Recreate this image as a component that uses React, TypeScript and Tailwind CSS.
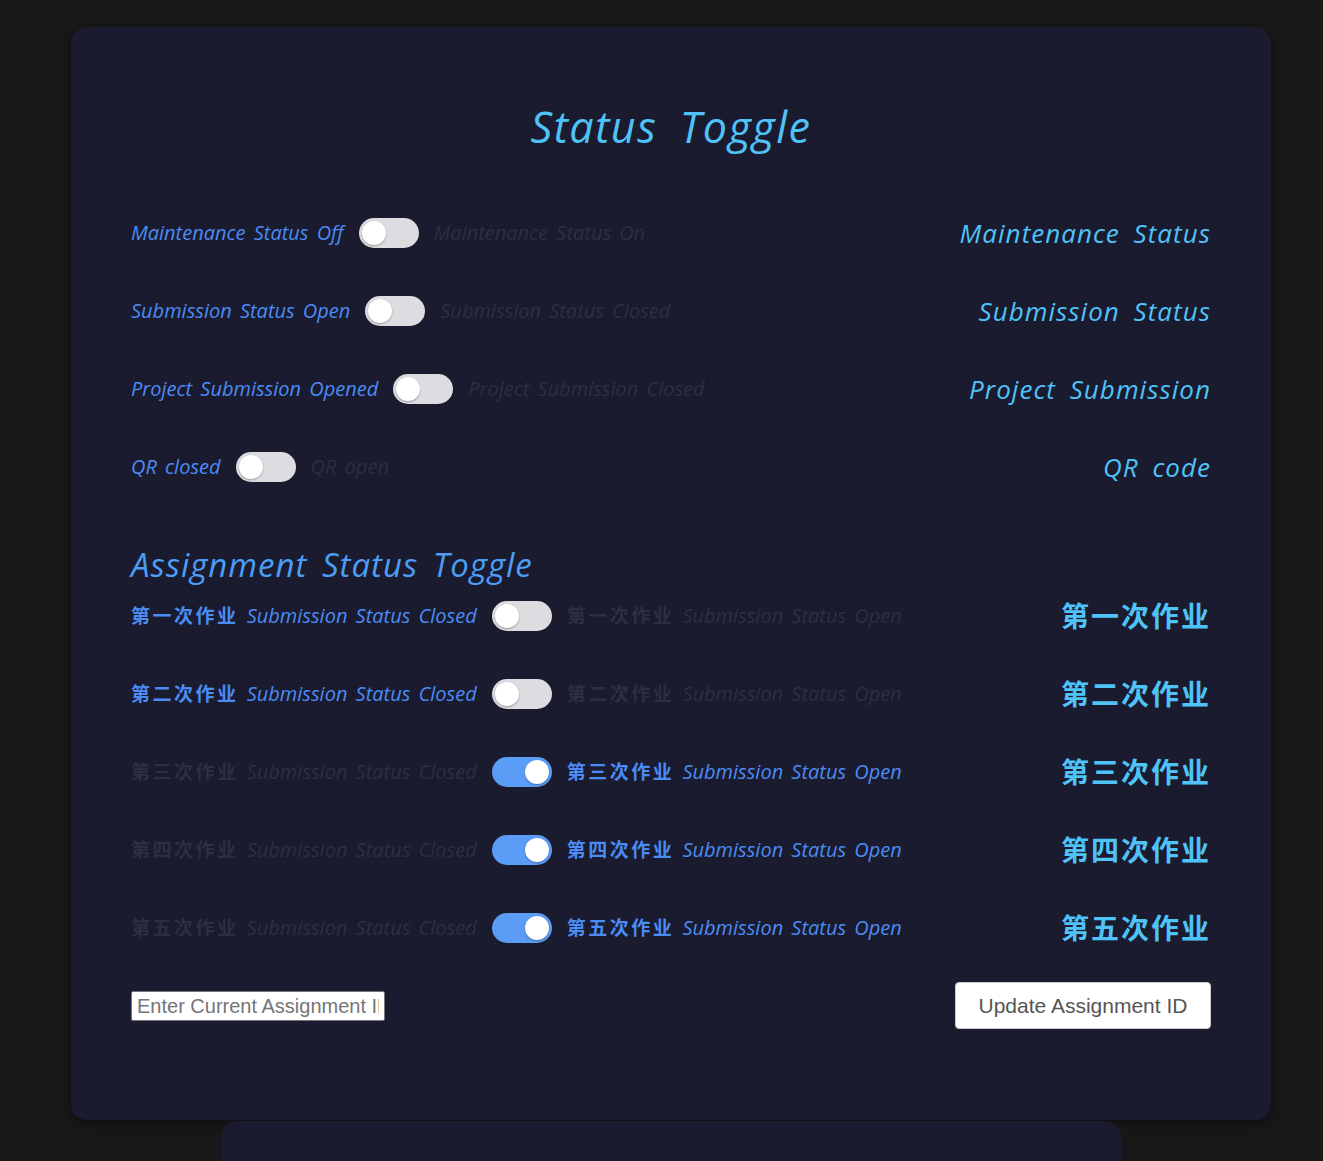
import React, { useState } from "react";

const font = { fontFamily: '"Open Sans", "Noto Sans CJK SC", sans-serif' };

function Toggle({ on, onClick }: { on: boolean; onClick: () => void }) {
  return (
    <button
      onClick={onClick}
      className={`relative shrink-0 w-[60px] h-[30px] rounded-full ${on ? "bg-[#5b9cf6]" : "bg-[#dcdce1]"}`}
    >
      <span
        className={`absolute top-[3px] w-[24px] h-[24px] rounded-full bg-white shadow-[0_1px_2px_rgba(0,0,0,0.3)] ${on ? "left-[33px]" : "left-[3px]"}`}
      />
    </button>
  );
}

const statusRows = [
  { off: "Maintenance Status Off", on: "Maintenance Status On", title: "Maintenance Status" },
  { off: "Submission Status Open", on: "Submission Status Closed", title: "Submission Status" },
  { off: "Project Submission Opened", on: "Project Submission Closed", title: "Project Submission" },
  { off: "QR closed", on: "QR open", title: "QR code" },
];

const assignments = ["第一次作业", "第二次作业", "第三次作业", "第四次作业", "第五次作业"];

export default function App() {
  const [status, setStatus] = useState([false, false, false, false]);
  const [asg, setAsg] = useState([false, false, true, true, true]);

  const active = "text-[#4b8bf4]";
  const dim = "text-[#2c2f40]";

  return (
    <div className="min-h-[1161px] bg-[#181818] pt-[27px] overflow-hidden" style={font}>
      <div className="ml-[71px] w-[1200px] rounded-2xl bg-[#1a1b2e] px-[60px] pt-[72px] pb-[91px] shadow-[0_4px_12px_rgba(0,0,0,0.4)] italic [word-spacing:3px]">
        <h1 className="text-center text-[43px] leading-[56px] tracking-[0.035em] [word-spacing:10px] text-[#4fc3f7]">Status Toggle</h1>

        <div className="mt-[39px] flex flex-col">
          {statusRows.map((r, i) => (
            <div key={r.title} className="h-[78px] flex items-center">
              <div className="flex items-center gap-[15px] text-[20px]">
                <span className={status[i] ? dim : active}>{r.off}</span>
                <Toggle on={status[i]} onClick={() => setStatus(status.map((v, j) => (j === i ? !v : v)))} />
                <span className={status[i] ? active : dim}>{r.on}</span>
              </div>
              <span className="ml-auto text-[26px] tracking-[0.04em] [word-spacing:6px] text-[#4fc3f7]">{r.title}</span>
            </div>
          ))}
        </div>

        <h2 className="mt-[47px] text-[33px] leading-[24px] tracking-[0.03em] [word-spacing:5px] text-[#4b9df5]">Assignment Status Toggle</h2>

        <div className="flex flex-col">
          {assignments.map((a, i) => (
            <div key={a} className="h-[78px] flex items-center">
              <div className="flex items-center gap-[15px] text-[20px]">
                <span className={asg[i] ? dim : active}>
                  <span className="not-italic font-bold text-[19px] tracking-[2.5px]">{a}</span> Submission Status Closed
                </span>
                <Toggle on={asg[i]} onClick={() => setAsg(asg.map((v, j) => (j === i ? !v : v)))} />
                <span className={asg[i] ? active : dim}>
                  <span className="not-italic font-bold text-[19px] tracking-[2.5px]">{a}</span> Submission Status Open
                </span>
              </div>
              <span className="ml-auto not-italic font-bold text-[28px] tracking-[2px] text-[#4fc3f7] [word-spacing:0]">{a}</span>
            </div>
          ))}
        </div>

        <div className="mt-[15px] flex items-center not-italic [word-spacing:0]" style={{ fontFamily: '"Liberation Sans", Arial, sans-serif' }}>
          <input
            placeholder="Enter Current Assignment ID"
            className="w-[254px] h-[30px] bg-white border border-[#767676] rounded-[2px] px-[5px] text-[20px] text-[#333] placeholder:text-[#757575] outline-none"
          />
          <button className="ml-auto w-[256px] h-[47px] bg-white rounded-[4px] border border-[#ccc] text-[21px] text-[#555]">
            Update Assignment ID
          </button>
        </div>
      </div>
      <div className="ml-[221px] mt-px w-[900px] h-[60px] rounded-t-2xl bg-[#1a1b2e]" />
    </div>
  );
}
